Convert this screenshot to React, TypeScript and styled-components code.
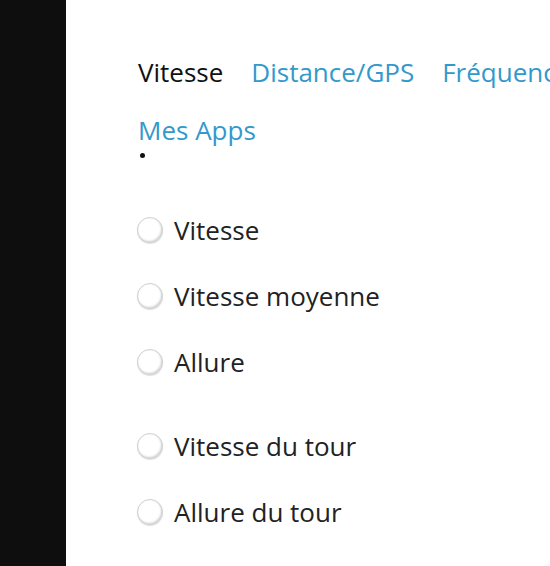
import React from "react";
import styled, { createGlobalStyle } from "styled-components";

const Global = createGlobalStyle`
  html, body {
    margin: 0;
    padding: 0;
    overflow: hidden;
    background: #ffffff;
  }
  body {
    font-family: "Open Sans", "Noto Sans", sans-serif;
  }
`;

const Page = styled.div`
  display: grid;
  grid-template-columns: 66px 1fr;
  height: 566px;
  width: 550px;
  overflow: hidden;
`;

const Sidebar = styled.aside`
  background: #0e0e0e;
`;

const Main = styled.main`
  padding: 54px 0 0 72px;
  overflow: hidden;
`;

const TabList = styled.ul`
  list-style: none;
  margin: 0;
  padding: 0;
  width: 640px;
  display: flex;
  flex-wrap: wrap;
  column-gap: 28px;
  row-gap: 22px;
`;

const Tab = styled.li<{ $active?: boolean }>`
  font-size: 26px;
  line-height: 36px;
  white-space: nowrap;
  color: ${(p) => (p.$active ? "#111111" : "#3399cc")};
`;

const Bullet = styled.div`
  width: 5px;
  height: 5px;
  border-radius: 50%;
  background: #111;
  margin: 5px 0 0 2px;
`;

const Groups = styled.div`
  margin-top: 54px;
  display: flex;
  flex-direction: column;
  gap: 48px;
`;

const Group = styled.div`
  display: flex;
  flex-direction: column;
  gap: 30px;
`;

const Option = styled.label`
  display: flex;
  align-items: center;
  gap: 11px;
  height: 36px;
  font-size: 26px;
  line-height: 36px;
  color: #222222;
  margin-left: -1px;
`;

const Radio = styled.span`
  box-sizing: border-box;
  width: 26px;
  height: 26px;
  border-radius: 50%;
  border: 1px solid #cfcfcf;
  background: #ffffff;
  box-shadow: inset -1px -1px 2px rgba(0, 0, 0, 0.18),
    0 1px 1px rgba(0, 0, 0, 0.12);
  flex: none;
`;

const groups = [
  ["Vitesse", "Vitesse moyenne", "Allure"],
  ["Vitesse du tour", "Allure du tour"],
];

export default function App() {
  return (
    <>
      <Global />
      <Page>
        <Sidebar />
        <Main>
          <TabList>
            <Tab $active>Vitesse</Tab>
            <Tab>Distance/GPS</Tab>
            <Tab>Fréquence cardiaque</Tab>
            <Tab>Mes Apps</Tab>
          </TabList>
          <Bullet />
          <Groups>
            {groups.map((g, i) => (
              <Group key={i}>
                {g.map((label) => (
                  <Option key={label}>
                    <Radio />
                    {label}
                  </Option>
                ))}
              </Group>
            ))}
          </Groups>
        </Main>
      </Page>
    </>
  );
}
